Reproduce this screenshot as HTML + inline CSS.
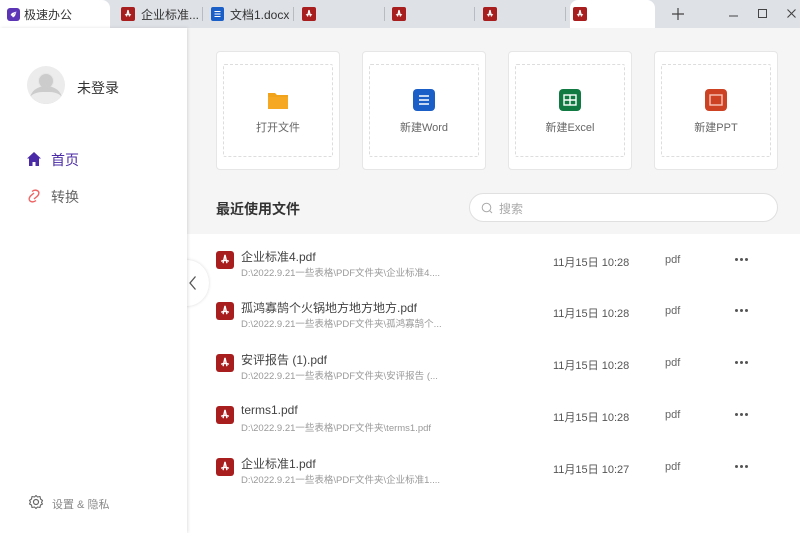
<!DOCTYPE html>
<html><head><meta charset="utf-8"><style>
*{margin:0;padding:0;box-sizing:border-box}
body{width:800px;height:533px;overflow:hidden;font-family:"Liberation Sans","Noto Sans CJK SC",sans-serif;background:#fff;position:relative;color:#333}
.a{position:absolute}
.tabbar{left:0;top:0;width:800px;height:28px;background:#dee1e6}
.tab{position:absolute;top:0;height:28px;font-size:12px;color:#333;display:flex;align-items:center}
.sep{position:absolute;top:7px;width:1px;height:14px;background:#b8bcc2}
.pi{width:14px;height:14px;background:#a81e1e;border-radius:2px;display:inline-block;position:relative}
.card{position:absolute;top:51px;width:124px;height:119px;background:#fff;border:1px solid #e6e6e6;border-radius:4px}
.card .in{position:absolute;left:6px;top:12px;right:6px;bottom:12px;border:1px dashed #ddd;border-radius:2px}
.card .lb{position:absolute;left:0;right:0;top:67px;text-align:center;font-size:11px;color:#666}
.card .ic{position:absolute;left:50%;top:37px;margin-left:-11px;width:22px;height:22px;border-radius:4px}
.row{position:absolute;left:187px;width:613px;height:52px}
.row .pdf{position:absolute;left:29px;top:3px;width:18px;height:18px;background:#a81e1e;border-radius:3px}
.row .t{position:absolute;left:54px;top:0;font-size:12px;color:#444;white-space:nowrap}
.row .p{position:absolute;left:54px;top:17px;font-size:9.5px;color:#999;white-space:nowrap}
.row .d{position:absolute;left:366px;top:6px;font-size:11px;color:#555}
.row .f{position:absolute;left:478px;top:6px;font-size:11px;color:#666}
.row .m{position:absolute;left:548px;top:10px;width:14px;height:3px}
.row .m i{position:absolute;top:0;width:3px;height:3px;border-radius:50%;background:#555}
</style></head><body>
<div class="a tabbar"></div>
<div class="tab" style="left:0;width:110px;background:#fff;border-radius:0 8px 0 0;padding-left:7px">
<span style="width:13px;height:13px;background:#5b35b5;border-radius:3px;display:inline-block;position:relative"><svg width="13" height="13" viewBox="0 0 13 13" style="position:absolute;left:0;top:0"><path d="M9.5 3.5 L5 5 L3.5 7 L5 8 L8 5.5Z M9.5 3.5 L8 8 L6 9.5 L5 8Z" fill="#fff"/></svg></span><span style="margin-left:4px">极速办公</span></div>
<div class="tab" style="left:121px"><span class="pi"><svg width="14" height="14" viewBox="0 0 14 14" style="position:absolute"><path d="M7 3 L5.5 9.5 M7 3 L8.5 9.5 M4 8 Q7 6.5 10 8" stroke="#fff" stroke-width="1.2" fill="none"/></svg></span><span style="margin-left:6px">企业标准...</span></div>
<div class="sep" style="left:202px"></div>
<div class="tab" style="left:211px"><span style="width:13px;height:14px;background:#1a5fc8;border-radius:2px;display:inline-block;position:relative"><svg width="13" height="14" style="position:absolute"><path d="M3.5 4.5h6M3.5 7h6M3.5 9.5h6" stroke="#fff" stroke-width="1"/></svg></span><span style="margin-left:6px">文档1.docx</span></div>
<div class="sep" style="left:293px"></div>
<div class="tab" style="left:302px"><span class="pi"><svg width="14" height="14" viewBox="0 0 14 14" style="position:absolute"><path d="M7 3 L5.5 9.5 M7 3 L8.5 9.5 M4 8 Q7 6.5 10 8" stroke="#fff" stroke-width="1.2" fill="none"/></svg></span></div>
<div class="sep" style="left:384px"></div>
<div class="tab" style="left:392px"><span class="pi"><svg width="14" height="14" viewBox="0 0 14 14" style="position:absolute"><path d="M7 3 L5.5 9.5 M7 3 L8.5 9.5 M4 8 Q7 6.5 10 8" stroke="#fff" stroke-width="1.2" fill="none"/></svg></span></div>
<div class="sep" style="left:474px"></div>
<div class="tab" style="left:483px"><span class="pi"><svg width="14" height="14" viewBox="0 0 14 14" style="position:absolute"><path d="M7 3 L5.5 9.5 M7 3 L8.5 9.5 M4 8 Q7 6.5 10 8" stroke="#fff" stroke-width="1.2" fill="none"/></svg></span></div>
<div class="sep" style="left:565px"></div>
<div class="tab" style="left:570px;width:85px;background:#fff;border-radius:8px 8px 0 0;padding-left:3px"><span class="pi"><svg width="14" height="14" viewBox="0 0 14 14" style="position:absolute"><path d="M7 3 L5.5 9.5 M7 3 L8.5 9.5 M4 8 Q7 6.5 10 8" stroke="#fff" stroke-width="1.2" fill="none"/></svg></span></div>
<svg class="a" style="left:671px;top:7px" width="14" height="14"><path d="M7 1v12M1 7h12" stroke="#444" stroke-width="1.2"/></svg>
<svg class="a" style="left:728px;top:9px" width="12" height="12"><path d="M1 7h9" stroke="#444" stroke-width="1"/></svg>
<svg class="a" style="left:757px;top:8px" width="12" height="12"><rect x="1.5" y="1.5" width="8" height="8" fill="none" stroke="#444"/></svg>
<svg class="a" style="left:786px;top:8px" width="12" height="12"><path d="M1.5 1.5l8 8M9.5 1.5l-8 8" stroke="#444" stroke-width="1.1"/></svg>

<div class="a" style="left:0;top:28px;width:187px;height:505px;background:#fff;box-shadow:1px 0 3px rgba(0,0,0,.12);z-index:2">
<div class="a" style="left:27px;top:38px;width:38px;height:38px;border-radius:50%;background:#ececec;overflow:hidden">
<div class="a" style="left:11px;top:7px;width:16px;height:16px;border-radius:50%;background:#ccc;border:1px solid #e6e6e6"></div>
<div class="a" style="left:3px;top:20px;width:32px;height:26px;border-radius:50%;background:#ccc"></div>
<div class="a" style="left:2px;top:26px;width:34px;height:20px;background:#ececec;border-radius:40% 40% 0 0"></div>
</div>
<div class="a" style="left:77px;top:50px;font-size:14px;color:#333">未登录</div>
<svg class="a" style="left:26px;top:123px" width="16" height="16" viewBox="0 0 16 16"><path d="M8 1 L15 7.5 H13 V15 H9.5 V11 H6.5 V15 H3 V7.5 H1Z" fill="#4a2aa6"/></svg>
<div class="a" style="left:51px;top:122px;font-size:14px;color:#4a2aa6">首页</div>
<svg class="a" style="left:26px;top:160px" width="16" height="16" viewBox="0 0 16 16"><path d="M6 3.5 Q9 1 12 3 Q14 5 11.5 8 L8 11 M10 12.5 Q7 15 4 13 Q2 11 4.5 8 L8 5" stroke="#f06464" stroke-width="1.4" fill="none"/></svg>
<div class="a" style="left:51px;top:159px;font-size:14px;color:#666">转换</div>
<svg class="a" style="left:28px;top:466px" width="16" height="16" viewBox="0 0 16 16"><circle cx="8" cy="8" r="2.5" fill="none" stroke="#666" stroke-width="1.2"/><path d="M8 1.5 L9.5 3 L12 2.5 L12.5 5 L14.5 6.5 L13.5 8.5 L14.5 10 L12.5 11 L12 13.5 L9.5 13 L8 14.5 L6.5 13 L4 13.5 L3.5 11 L1.5 10 L2.5 8 L1.5 6.5 L3.5 5 L4 2.5 L6.5 3Z" fill="none" stroke="#666" stroke-width="1.1" stroke-linejoin="round"/></svg>
<div class="a" style="left:52px;top:468px;font-size:11px;color:#888">设置 &amp; 隐私</div>
</div>

<div class="a" style="left:187px;top:28px;width:613px;height:206px;background:#f5f5f5"></div>
<div class="card" style="left:216px"><div class="in"></div>
<svg class="ic" style="border-radius:0" width="22" height="22" viewBox="0 0 22 22"><path d="M1 4h7l2 2h11v14H1z" fill="#f2a31c"/><path d="M1 8h20v12H1z" fill="#f7a823"/></svg>
<div class="lb">打开文件</div></div>
<div class="card" style="left:362px"><div class="in"></div>
<svg class="ic" style="background:#1a5fc8" width="22" height="22"><path d="M6 7h10M6 11h10M6 15h10" stroke="#fff" stroke-width="1.4"/></svg>
<div class="lb">新建Word</div></div>
<div class="card" style="left:508px"><div class="in"></div>
<svg class="ic" style="background:#117a43" width="22" height="22"><rect x="5" y="6" width="12" height="10" fill="none" stroke="#fff" stroke-width="1.4"/><path d="M11 6v10M5 11h12" stroke="#fff" stroke-width="1.4"/></svg>
<div class="lb">新建Excel</div></div>
<div class="card" style="left:654px"><div class="in"></div>
<svg class="ic" style="background:#cc4222" width="22" height="22"><rect x="5" y="6" width="12" height="10" fill="none" stroke="#f7c6b8" stroke-width="1.4"/></svg>
<div class="lb">新建PPT</div></div>

<div class="a" style="left:216px;top:199px;font-size:14px;color:#333;font-weight:bold">最近使用文件</div>
<div class="a" style="left:469px;top:193px;width:309px;height:29px;border:1px solid #e0e0e0;border-radius:15px;background:#fff"></div>
<svg class="a" style="left:481px;top:202px" width="12" height="12"><circle cx="5.5" cy="5.5" r="4.3" fill="none" stroke="#aaa" stroke-width="1"/><path d="M8.7 8.7l2.3 2.3" stroke="#aaa"/></svg>
<div class="a" style="left:499px;top:200px;font-size:12px;color:#aaa">搜索</div>

<div class="a" style="left:165px;top:260px;width:44px;height:46px;border-radius:50%;background:#fff;box-shadow:0 0 3px rgba(0,0,0,.15);z-index:1"></div>
<svg class="a" style="left:188px;top:275px;z-index:3" width="10" height="16"><path d="M7.5 1.5 L2 8 L7.5 14.5" stroke="#555" stroke-width="1.3" fill="none"/></svg>

<div class="row" style="top:248px"><div class="pdf"><svg width="18" height="18" viewBox="0 0 14 14"><path d="M7 3 L5.5 9.5 M7 3 L8.5 9.5 M4 8 Q7 6.5 10 8" stroke="#fff" stroke-width="1.1" fill="none"/></svg></div><div class="t">企业标准4.pdf</div><div class="p">D:\2022.9.21一些表格\PDF文件夹\企业标准4....</div><div class="d">11月15日 10:28</div><div class="f">pdf</div><div class="m"><i style="left:0"></i><i style="left:5px"></i><i style="left:10px"></i></div></div>
<div class="row" style="top:299px"><div class="pdf"><svg width="18" height="18" viewBox="0 0 14 14"><path d="M7 3 L5.5 9.5 M7 3 L8.5 9.5 M4 8 Q7 6.5 10 8" stroke="#fff" stroke-width="1.1" fill="none"/></svg></div><div class="t">孤鸿寡鹄个火锅地方地方地方.pdf</div><div class="p">D:\2022.9.21一些表格\PDF文件夹\孤鸿寡鹄个...</div><div class="d">11月15日 10:28</div><div class="f">pdf</div><div class="m"><i style="left:0"></i><i style="left:5px"></i><i style="left:10px"></i></div></div>
<div class="row" style="top:351px"><div class="pdf"><svg width="18" height="18" viewBox="0 0 14 14"><path d="M7 3 L5.5 9.5 M7 3 L8.5 9.5 M4 8 Q7 6.5 10 8" stroke="#fff" stroke-width="1.1" fill="none"/></svg></div><div class="t">安评报告 (1).pdf</div><div class="p">D:\2022.9.21一些表格\PDF文件夹\安评报告 (...</div><div class="d">11月15日 10:28</div><div class="f">pdf</div><div class="m"><i style="left:0"></i><i style="left:5px"></i><i style="left:10px"></i></div></div>
<div class="row" style="top:403px"><div class="pdf"><svg width="18" height="18" viewBox="0 0 14 14"><path d="M7 3 L5.5 9.5 M7 3 L8.5 9.5 M4 8 Q7 6.5 10 8" stroke="#fff" stroke-width="1.1" fill="none"/></svg></div><div class="t">terms1.pdf</div><div class="p">D:\2022.9.21一些表格\PDF文件夹\terms1.pdf</div><div class="d">11月15日 10:28</div><div class="f">pdf</div><div class="m"><i style="left:0"></i><i style="left:5px"></i><i style="left:10px"></i></div></div>
<div class="row" style="top:455px"><div class="pdf"><svg width="18" height="18" viewBox="0 0 14 14"><path d="M7 3 L5.5 9.5 M7 3 L8.5 9.5 M4 8 Q7 6.5 10 8" stroke="#fff" stroke-width="1.1" fill="none"/></svg></div><div class="t">企业标准1.pdf</div><div class="p">D:\2022.9.21一些表格\PDF文件夹\企业标准1....</div><div class="d">11月15日 10:27</div><div class="f">pdf</div><div class="m"><i style="left:0"></i><i style="left:5px"></i><i style="left:10px"></i></div></div>
</body></html>
